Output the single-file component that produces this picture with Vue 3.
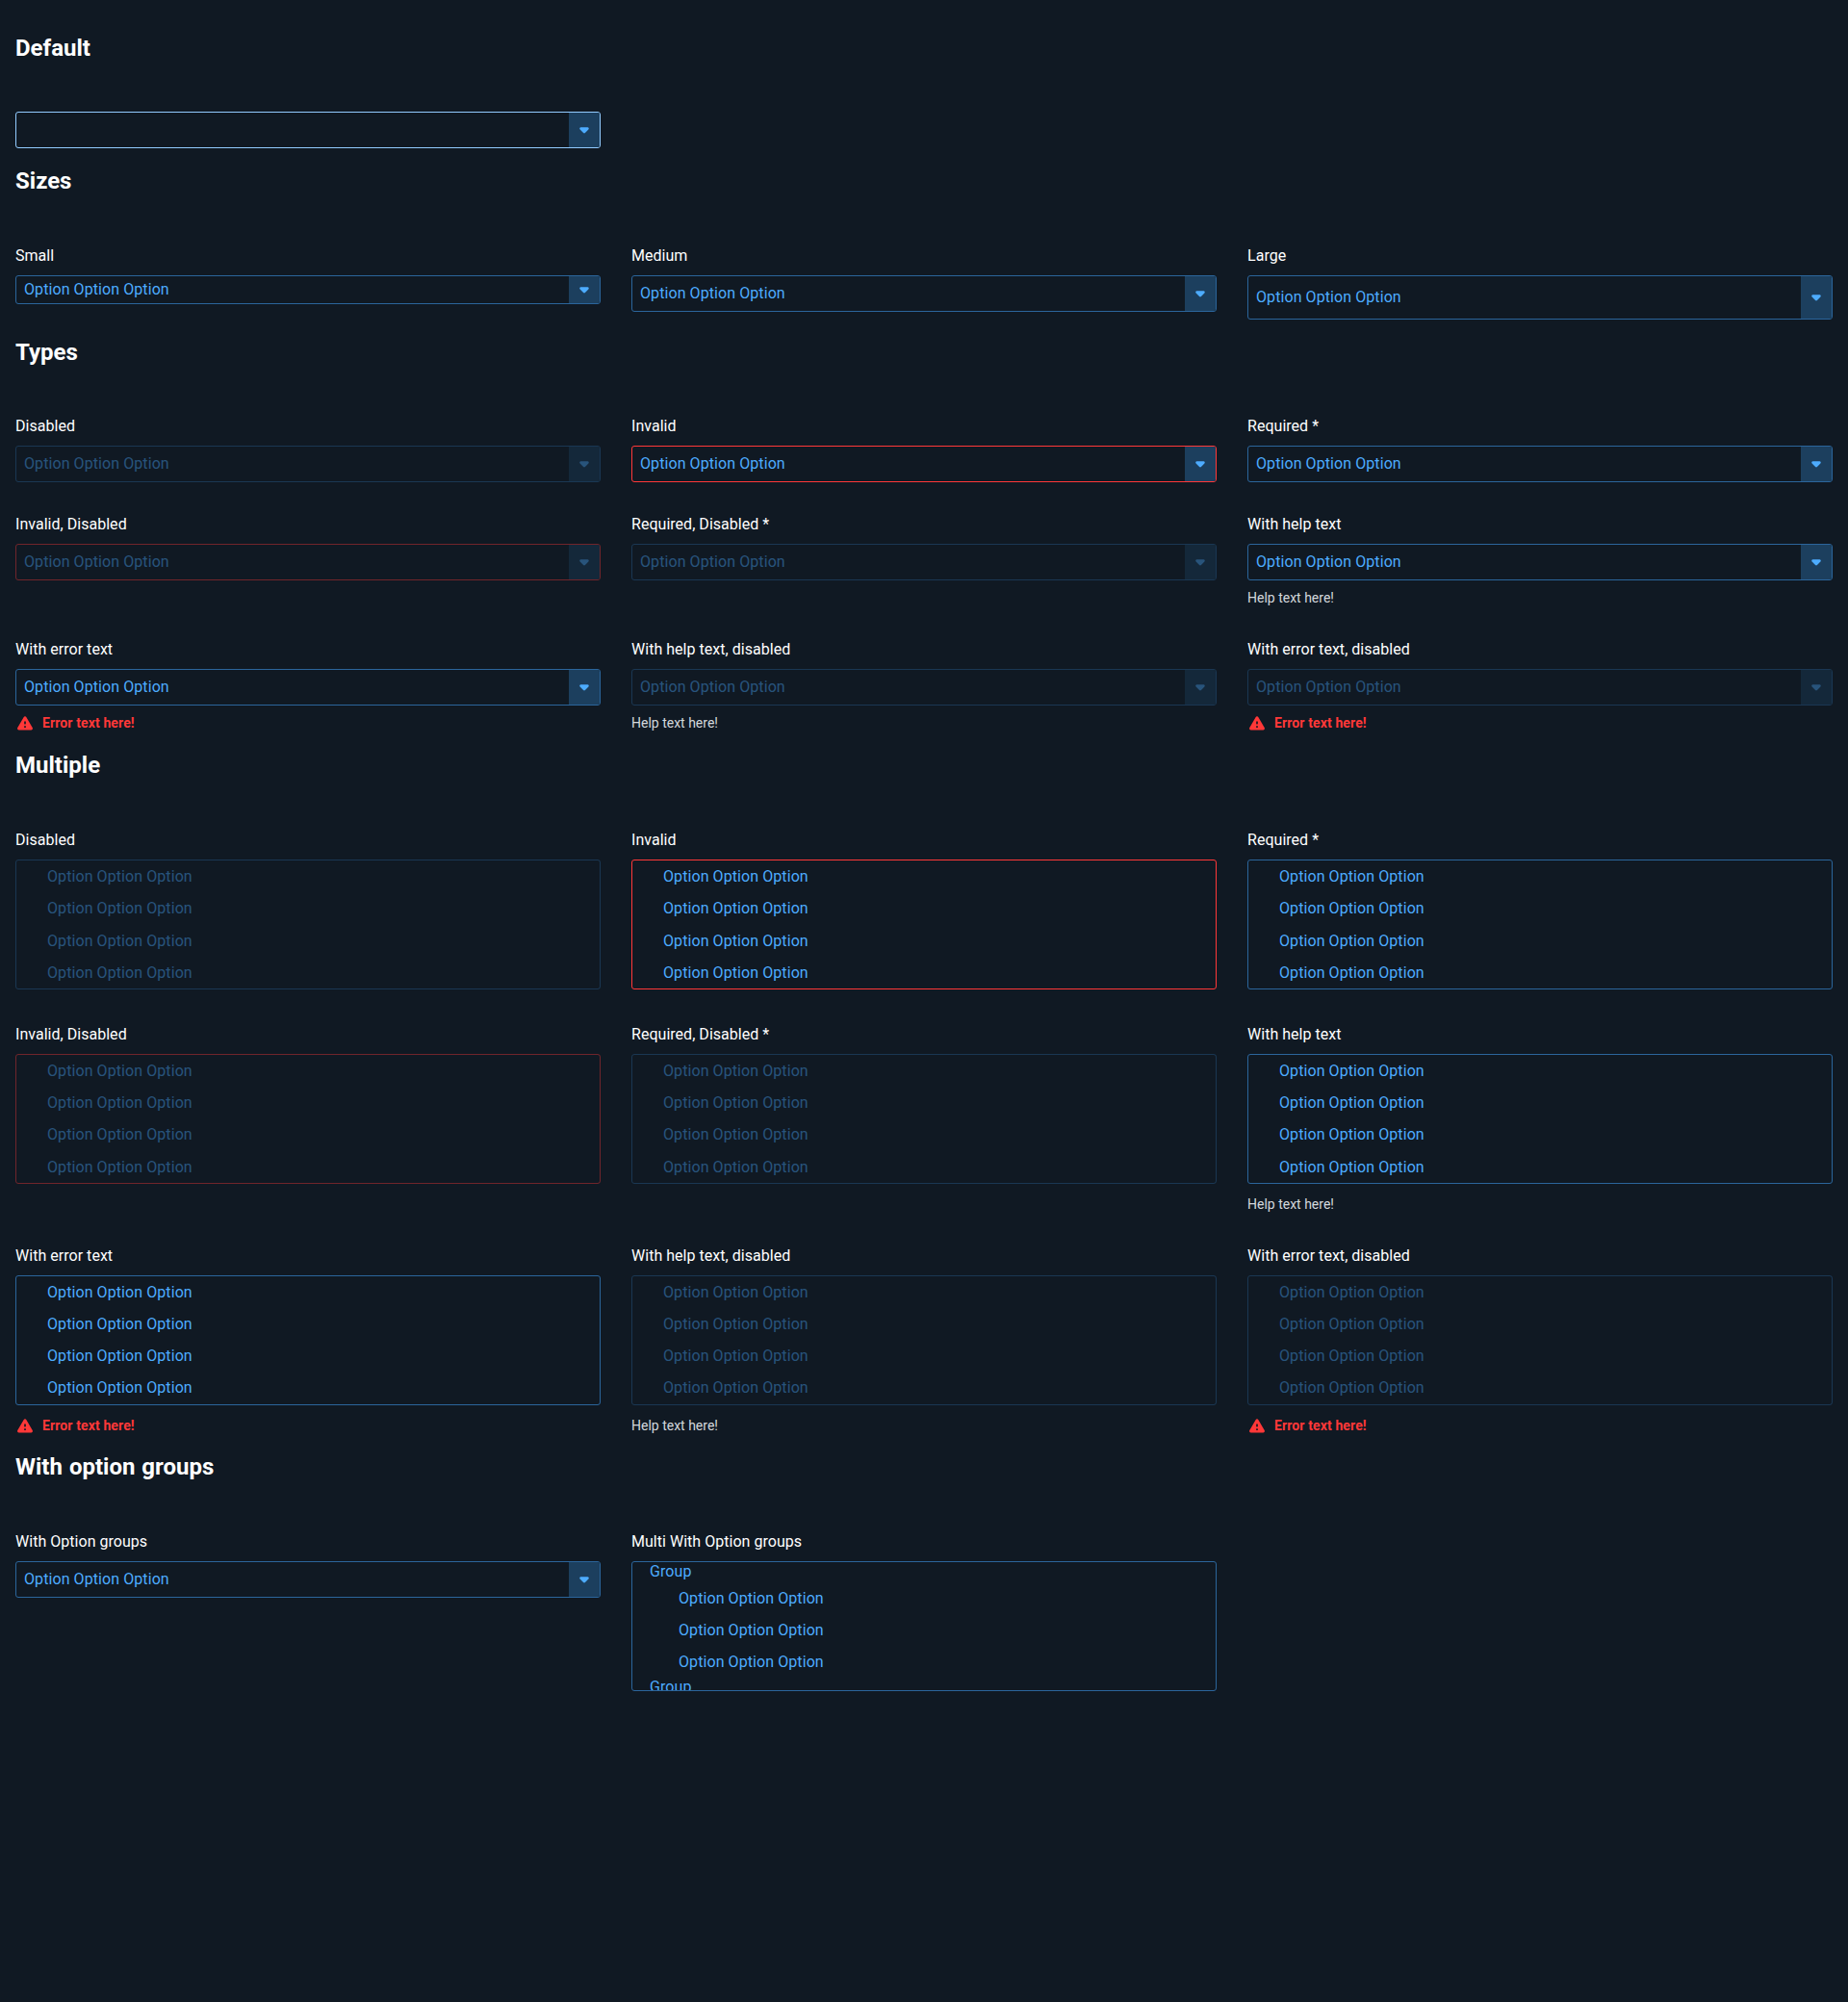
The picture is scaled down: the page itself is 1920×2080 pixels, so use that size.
<script setup>
const OPT = 'Option Option Option'

const states = (multiple) => [
  { label: 'Disabled', disabled: true, multiple },
  { label: 'Invalid', invalid: true, multiple },
  { label: 'Required *', multiple },
  { label: 'Invalid, Disabled', invalid: true, disabled: true, multiple },
  { label: 'Required, Disabled *', disabled: true, multiple },
  { label: 'With help text', help: 'Help text here!', multiple },
  { label: 'With error text', error: 'Error text here!', multiple },
  { label: 'With help text, disabled', disabled: true, help: 'Help text here!', multiple },
  { label: 'With error text, disabled', disabled: true, error: 'Error text here!', multiple },
]

const groups = [
  { name: 'Group', options: [OPT, OPT, OPT] },
  { name: 'Group', options: [] },
]

const sections = [
  { title: 'Default', fields: [{ focused: true, empty: true }] },
  {
    title: 'Sizes',
    fields: [
      { label: 'Small', size: 'small' },
      { label: 'Medium' },
      { label: 'Large', size: 'large' },
    ],
  },
  { title: 'Types', fields: states(false) },
  { title: 'Multiple', fields: states(true) },
  {
    title: 'With option groups',
    fields: [{ label: 'With Option groups' }, { label: 'Multi With Option groups', multiple: true, groups }],
  },
]
</script>

<template>
  <main class="page">
    <section v-for="s in sections" :key="s.title">
      <h2>{{ s.title }}</h2>
      <div class="grid">
        <div v-for="(f, i) in s.fields" :key="i" class="field">
          <div v-if="f.label" class="label">{{ f.label }}</div>
          <div
            v-if="!f.multiple"
            class="select"
            :class="[f.size, { disabled: f.disabled, invalid: f.invalid, focused: f.focused }]"
          >
            <span class="value">{{ f.empty ? '' : OPT }}</span>
            <span class="toggle">
              <svg width="32" height="32" viewBox="0 0 24 24">
                <path
                  d="M8.710 11.710l2.590 2.590c.39.39 1.020.39 1.410 0l2.590-2.590c.63-.63.18-1.710-.71-1.710H9.410c-.89 0-1.330 1.080-.7 1.710z"
                  fill="currentColor"
                />
              </svg>
            </span>
          </div>
          <div v-else class="listbox" :class="{ disabled: f.disabled, invalid: f.invalid }">
            <template v-if="f.groups">
              <div v-for="(g, k) in f.groups" :key="k" class="group">
                <div class="group-label">{{ g.name }}</div>
                <div v-for="(o, n) in g.options" :key="n" class="option">{{ o }}</div>
              </div>
            </template>
            <template v-else>
              <div v-for="n in 4" :key="n" class="option">{{ OPT }}</div>
            </template>
          </div>
          <div v-if="f.help" class="help">{{ f.help }}</div>
          <div v-if="f.error" class="error">
            <svg width="20" height="20" viewBox="0 0 24 24">
              <path
                d="M4.470 21h15.060c1.540 0 2.500-1.670 1.730-3L13.730 4.990c-.77-1.330-2.690-1.330-3.460 0L2.740 18c-.77 1.330.19 3 1.730 3zM12 14c-.55 0-1-.45-1-1v-2c0-.55.45-1 1-1s1 .45 1 1v2c0 .55-.45 1-1 1zm1 4h-2v-2h2v2z"
                fill="currentColor"
              />
            </svg>
            <span>{{ f.error }}</span>
          </div>
        </div>
      </div>
    </section>
  </main>
</template>

<style>
body {
  margin: 0;
  background: #101923;
}
</style>

<style scoped>
.page {
  box-sizing: border-box;
  min-height: 2080px;
  padding: 16px;
  background: #101923;
  color: #fff;
  font-family: Roboto, sans-serif;
  font-size: 16px;
  letter-spacing: 0.08px;
  overflow: hidden;
}
section {
  display: flow-root;
}
h2 {
  margin: 20px 0 51.8px;
  font-size: 24px;
  line-height: 28px;
  font-weight: 700;
  letter-spacing: 0;
  word-spacing: 1px;
}
.grid {
  display: grid;
  grid-template-columns: repeat(3, 1fr);
  gap: 32px;
  align-items: start;
}
.field {
  display: flex;
  flex-direction: column;
}
.label {
  height: 24px;
  line-height: 24px;
  margin-bottom: 8px;
  letter-spacing: 0.03px;
}
.select {
  box-sizing: border-box;
  display: flex;
  height: 38px;
  border: 1px solid #2b659b;
  border-radius: 3px;
  color: #4dacff;
  overflow: hidden;
}
.select.small {
  height: 30px;
}
.select.large {
  height: 46px;
}
.value {
  flex: 1;
  align-self: center;
  padding-left: 8px;
  line-height: 20px;
}
.toggle {
  display: flex;
  align-items: center;
  justify-content: center;
  width: 32px;
  background: #1c3f5e;
}
.listbox {
  box-sizing: border-box;
  height: 135px;
  margin-bottom: 2.7px;
  border: 1px solid #2b659b;
  border-radius: 3px;
  color: #4dacff;
  overflow: hidden;
}
.focused {
  border-color: #92cbff;
}
.invalid {
  border-color: #ff3838;
}
.disabled {
  opacity: 0.4;
}
.option {
  height: 33.22px;
  line-height: 33px;
  padding-left: 32px;
}
.group-label {
  height: 20.5px;
  line-height: 19px;
  padding-left: 18px;
}
.group .option {
  padding-left: 48px;
}
.help,
.error {
  height: 20px;
  margin-top: 8px;
  font-size: 14px;
  line-height: 20px;
}
.listbox + .help,
.listbox + .error {
  height: 19.6px;
  margin-top: 8.4px;
}
.help {
  color: #d4d8dd;
  letter-spacing: 0;
}
.error {
  display: flex;
  gap: 8px;
  color: #ff3838;
  font-weight: 700;
  letter-spacing: 0.12px;
}
.error svg {
  flex: none;
}
</style>
